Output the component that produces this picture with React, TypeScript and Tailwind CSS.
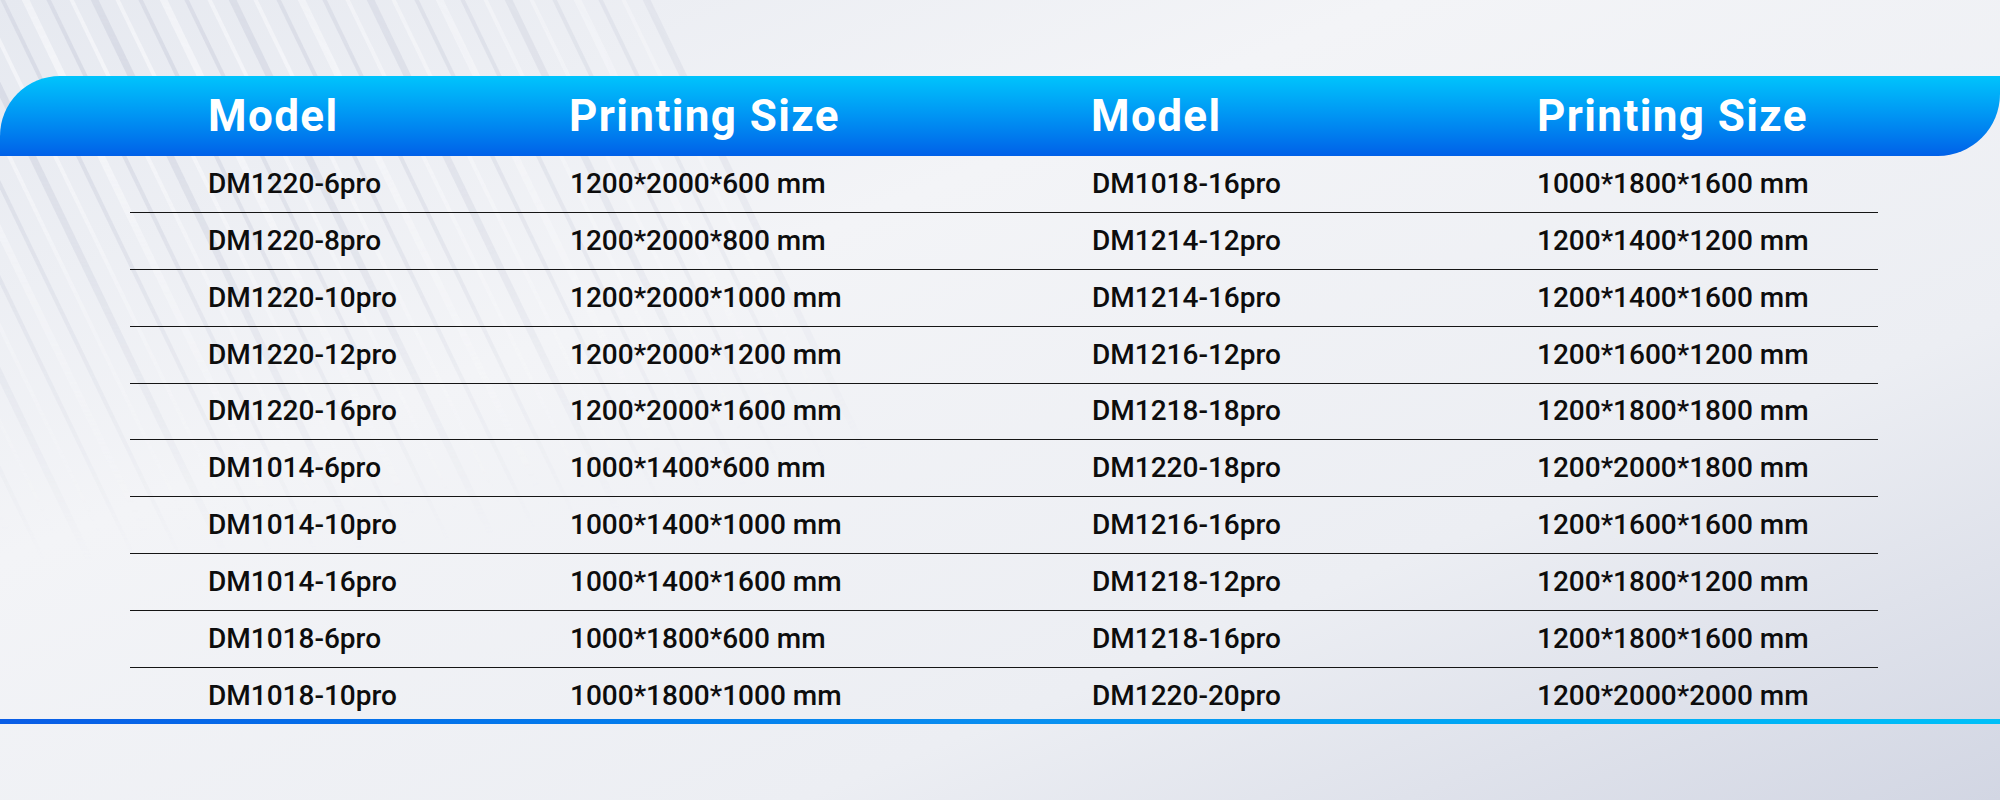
import React from "react";

type Row = { model: string; size: string; model2: string; size2: string };

const rows: Row[] = [
  { model: "DM1220-6pro", size: "1200*2000*600 mm", model2: "DM1018-16pro", size2: "1000*1800*1600 mm" },
  { model: "DM1220-8pro", size: "1200*2000*800 mm", model2: "DM1214-12pro", size2: "1200*1400*1200 mm" },
  { model: "DM1220-10pro", size: "1200*2000*1000 mm", model2: "DM1214-16pro", size2: "1200*1400*1600 mm" },
  { model: "DM1220-12pro", size: "1200*2000*1200 mm", model2: "DM1216-12pro", size2: "1200*1600*1200 mm" },
  { model: "DM1220-16pro", size: "1200*2000*1600 mm", model2: "DM1218-18pro", size2: "1200*1800*1800 mm" },
  { model: "DM1014-6pro", size: "1000*1400*600 mm", model2: "DM1220-18pro", size2: "1200*2000*1800 mm" },
  { model: "DM1014-10pro", size: "1000*1400*1000 mm", model2: "DM1216-16pro", size2: "1200*1600*1600 mm" },
  { model: "DM1014-16pro", size: "1000*1400*1600 mm", model2: "DM1218-12pro", size2: "1200*1800*1200 mm" },
  { model: "DM1018-6pro", size: "1000*1800*600 mm", model2: "DM1218-16pro", size2: "1200*1800*1600 mm" },
  { model: "DM1018-10pro", size: "1000*1800*1000 mm", model2: "DM1220-20pro", size2: "1200*2000*2000 mm" },
];

// soft diagonal streaks in the top-left corner
const Backdrop = () => {
  const streaks = Array.from({ length: 40 }, (_, i) => i);
  return (
    <svg className="absolute inset-0 h-full w-full" viewBox="0 0 2000 800" preserveAspectRatio="none">
      <defs>
        <linearGradient id="bg" x1="0" y1="0" x2="1" y2="1">
          <stop offset="0" stopColor="#e6e9f0" />
          <stop offset="0.35" stopColor="#f3f4f7" />
          <stop offset="0.7" stopColor="#eceef3" />
          <stop offset="1" stopColor="#d2d6e3" />
        </linearGradient>
        <radialGradient id="fade" cx="0.05" cy="0.1" r="0.6">
          <stop offset="0" stopColor="#fff" stopOpacity="1" />
          <stop offset="0.55" stopColor="#fff" stopOpacity="0.45" />
          <stop offset="1" stopColor="#fff" stopOpacity="0" />
        </radialGradient>
        <mask id="m">
          <rect width="2000" height="800" fill="url(#fade)" />
        </mask>
      </defs>
      <rect width="2000" height="800" fill="url(#bg)" />
      <g mask="url(#m)">
        {streaks.map((i) => (
          <line
            key={i}
            x1={-260 + i * 23}
            y1={-20}
            x2={-260 + i * 23 + 300}
            y2={600}
            stroke={i % 2 ? "#cdd1de" : "#fbfbfd"}
            strokeWidth={i % 3 === 0 ? 7 : 4}
            strokeOpacity={0.6}
          />
        ))}
      </g>
    </svg>
  );
};

export default function App() {
  return (
    <div className="relative h-[800px] w-full overflow-hidden font-['Roboto','Liberation_Sans',sans-serif]">
      <Backdrop />
      <div className="relative pt-[76px]">
        <div className="flex h-[80px] items-center rounded-tl-[60px] rounded-br-[62px] bg-linear-to-b from-[#00c4fc] to-[#0160e8] pl-[208px] text-[44px] font-bold tracking-[1.4px] text-white">
          <span className="w-[361px]">Model</span>
          <span className="w-[522px]">Printing Size</span>
          <span className="w-[446px]">Model</span>
          <span>Printing Size</span>
        </div>

        <div className="ml-[130px] w-[1748px] text-[28px] font-medium text-[#0d0d0d]">
          {rows.map((r, i) => (
            <div
              key={r.model}
              className={`flex h-[56.875px] items-center ${i < rows.length - 1 ? "border-b-[1.5px] border-[#151515]" : ""}`}
            >
              <span className="w-[440px] pl-[78px]">{r.model}</span>
              <span className="w-[522px]">{r.size}</span>
              <span className="w-[445px]">{r.model2}</span>
              <span className="flex-1">{r.size2}</span>
            </div>
          ))}
        </div>

        <div className="-mt-[6px] h-[5px] bg-linear-to-r from-[#0a5de6] via-[#0a8ef0] to-[#00c0f8]" />
      </div>
    </div>
  );
}
